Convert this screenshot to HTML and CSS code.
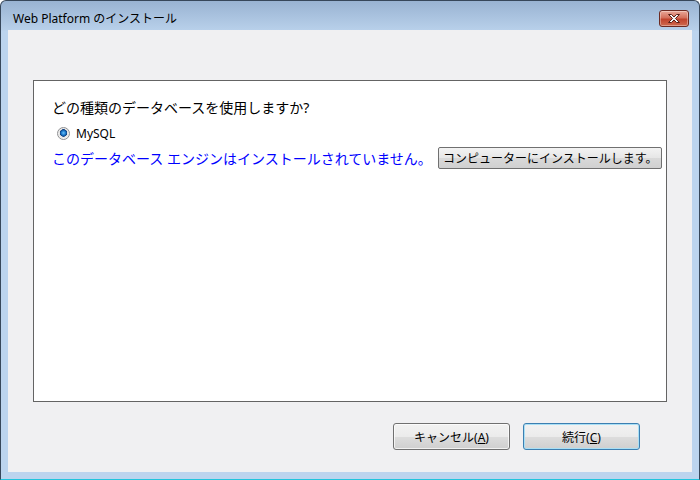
FILE: index.html
```html
<!DOCTYPE html>
<html>
    <head>
        <meta charset="utf-8">
        <link rel="stylesheet" href="styles.css">
    </head>
    <body>
        <div class="window">
            <div class="titlebar">
                <span class="title">Web Platform のインストール</span>
                <div class="close">
                    <svg width="14" height="11" viewBox="0 0 14 11">
                        <path d="M1.5 1.5h3l2.5 2.5 2.5-2.5h3l-4 4 4 4h-3l-2.5-2.5-2.5 2.5h-3l4-4z" fill="#f4f4f4" stroke="#5a2018" stroke-width="1" stroke-linejoin="round"/>
                    </svg>
                </div>
            </div>
            <div class="client">
                <div class="panel">
                    <p class="question">どの種類のデータベースを使用しますか?</p>
                    <label class="option"><span class="radio"></span>MySQL</label>
                    <div class="notice">
                        <span>このデータベース エンジンはインストールされていません。</span>
                        <button class="install">コンピューターにインストールします。</button>
                    </div>
                </div>
                <div class="actions">
                    <button class="btn">キャンセル(<u>A</u>)</button>
                    <button class="btn default">続行(<u>C</u>)</button>
                </div>
            </div>
        </div>
    </body>
</html>
```

FILE: styles.css
```css
:root {
    --frame: #bcd4ee;
    --client: #f0f0f2;
    --ui-font: "Noto Sans", "Noto Sans CJK JP", sans-serif;
}
body {
    margin: 0;
    width: 700px;
    height: 480px;
    overflow: hidden;
    font-family: var(--ui-font);
    color: #000;
}
.window {
    width: 700px;
    height: 480px;
    box-sizing: border-box;
    border: 1px solid #37475a;
    border-bottom-color: #22c4dc;
    border-radius: 6px 6px 0 0;
    background: linear-gradient(#99b3d2, #b8d0ea 29px, var(--frame) 30px);
    display: flex;
    flex-direction: column;
    padding: 0 7px 7px;
}
.titlebar {
    height: 29px;
    box-sizing: border-box;
    display: flex;
    align-items: flex-start;
    padding: 7px 3px 0 5px;
}
.title {
    flex: 1;
    font-size: 12px;
    line-height: 22px;
}
.close {
    margin-top: 2px;
    width: 30px;
    height: 17px;
    box-sizing: border-box;
    border: 1px solid #6c2a22;
    border-radius: 3px;
    background: linear-gradient(#e9a798, #d4705c 45%, #c0432d 55%, #cf6a4f);
    box-shadow: inset 0 0 0 1px rgba(255,255,255,.35);
    display: flex;
    align-items: center;
    justify-content: center;
}
.client {
    flex: 1;
    background: var(--client);
    padding: 50px 25px 0;
    display: flex;
    flex-direction: column;
}
.panel {
    height: 322px;
    box-sizing: border-box;
    border: 1px solid #646464;
    background: #fff;
    padding: 17px 4px 0 18px;
}
.question {
    margin: 0;
    font-size: 14px;
    line-height: 20px;
}
.option {
    display: flex;
    align-items: center;
    gap: 6px;
    height: 20px;
    margin-top: 5px;
    padding-left: 5px;
    font-size: 12px;
}
.radio {
    width: 13px;
    height: 13px;
    box-sizing: border-box;
    border: 1px solid #8f9092;
    border-radius: 50%;
    background: radial-gradient(circle at 50% 45%, #6fc0f5 0, #1f7fd2 2px, #0d3f80 3.5px, #e3e3e3 4px, #f6f6f6 6px);
}
.notice {
    display: flex;
    align-items: center;
    height: 22px;
    margin-top: 4px;
    color: #0000ff;
    font-size: 14px;
    white-space: nowrap;
}
.install {
    margin-left: auto;
    width: 224px;
    height: 22px;
    box-sizing: border-box;
    padding: 0 4px;
    text-align: left;
    font-family: var(--ui-font);
    font-size: 12px;
    color: #000;
    border: 1px solid #707070;
    border-radius: 2px;
    background: linear-gradient(#f3f3f3, #e6e6e6 50%, #d9d9d9 51%, #d0d0d0);
}
.actions {
    display: flex;
    justify-content: flex-end;
    gap: 13px;
    padding-right: 27px;
    margin-top: 21px;
}
.btn {
    width: 117px;
    height: 27px;
    box-sizing: border-box;
    font-family: var(--ui-font);
    font-size: 12px;
    color: #000;
    border: 1px solid #707070;
    border-radius: 3px;
    background: linear-gradient(#f2f2f2, #ebebeb 50%, #dddddd 51%, #cfcfcf);
    box-shadow: inset 0 0 0 1px rgba(255,255,255,.7);
}
.btn.default {
    border-color: #3c7fb1;
    box-shadow: inset 0 0 0 1px #a9dff5;
}
```
